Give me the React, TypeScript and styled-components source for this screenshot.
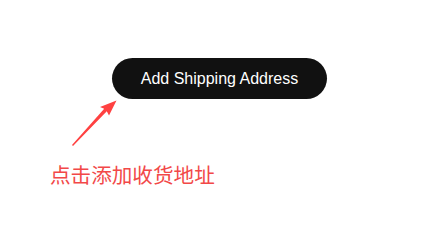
import React from "react";
import styled, { createGlobalStyle } from "styled-components";

const GlobalStyle = createGlobalStyle`
  html, body {
    margin: 0;
    padding: 0;
    background: #ffffff;
  }
`;

function App() {
  return (
    <>
      <GlobalStyle />
      <Page>
        <ButtonRow>
          <ShipButton>Add Shipping Address</ShipButton>
        </ButtonRow>
        <Hint>
          <Arrow width="50" height="50" viewBox="0 0 50 50">
            <polygon
              points="2,46 34.2,9.8 30,8 46.5,1.5 39,16.5 36.8,12.2 3,47"
              fill="#ff4141"
            />
          </Arrow>
          <HintText>点击添加收货地址</HintText>
        </Hint>
      </Page>
    </>
  );
}

export default App;

const Page = styled.div`
  width: 432px;
  height: 236px;
  padding-top: 58px;
  box-sizing: border-box;
  display: flex;
  flex-direction: column;
`;

const ButtonRow = styled.div`
  display: flex;
  padding-left: 112px;
`;

const ShipButton = styled.button`
  width: 215px;
  height: 41px;
  border: none;
  border-radius: 21px;
  background: #111111;
  color: #ffffff;
  font-family: "Liberation Sans", Arial, sans-serif;
  font-size: 16px;
  padding: 0;
  cursor: pointer;
`;

const Hint = styled.div`
  display: flex;
  flex-direction: column;
`;

const Arrow = styled.svg`
  display: block;
  margin-left: 70px;
`;

const HintText = styled.div`
  margin-top: 12px;
  margin-left: 50px;
  font-family: "Noto Sans CJK SC", sans-serif;
  font-size: 20.6px;
  line-height: 26px;
  color: #f24848;
`;
